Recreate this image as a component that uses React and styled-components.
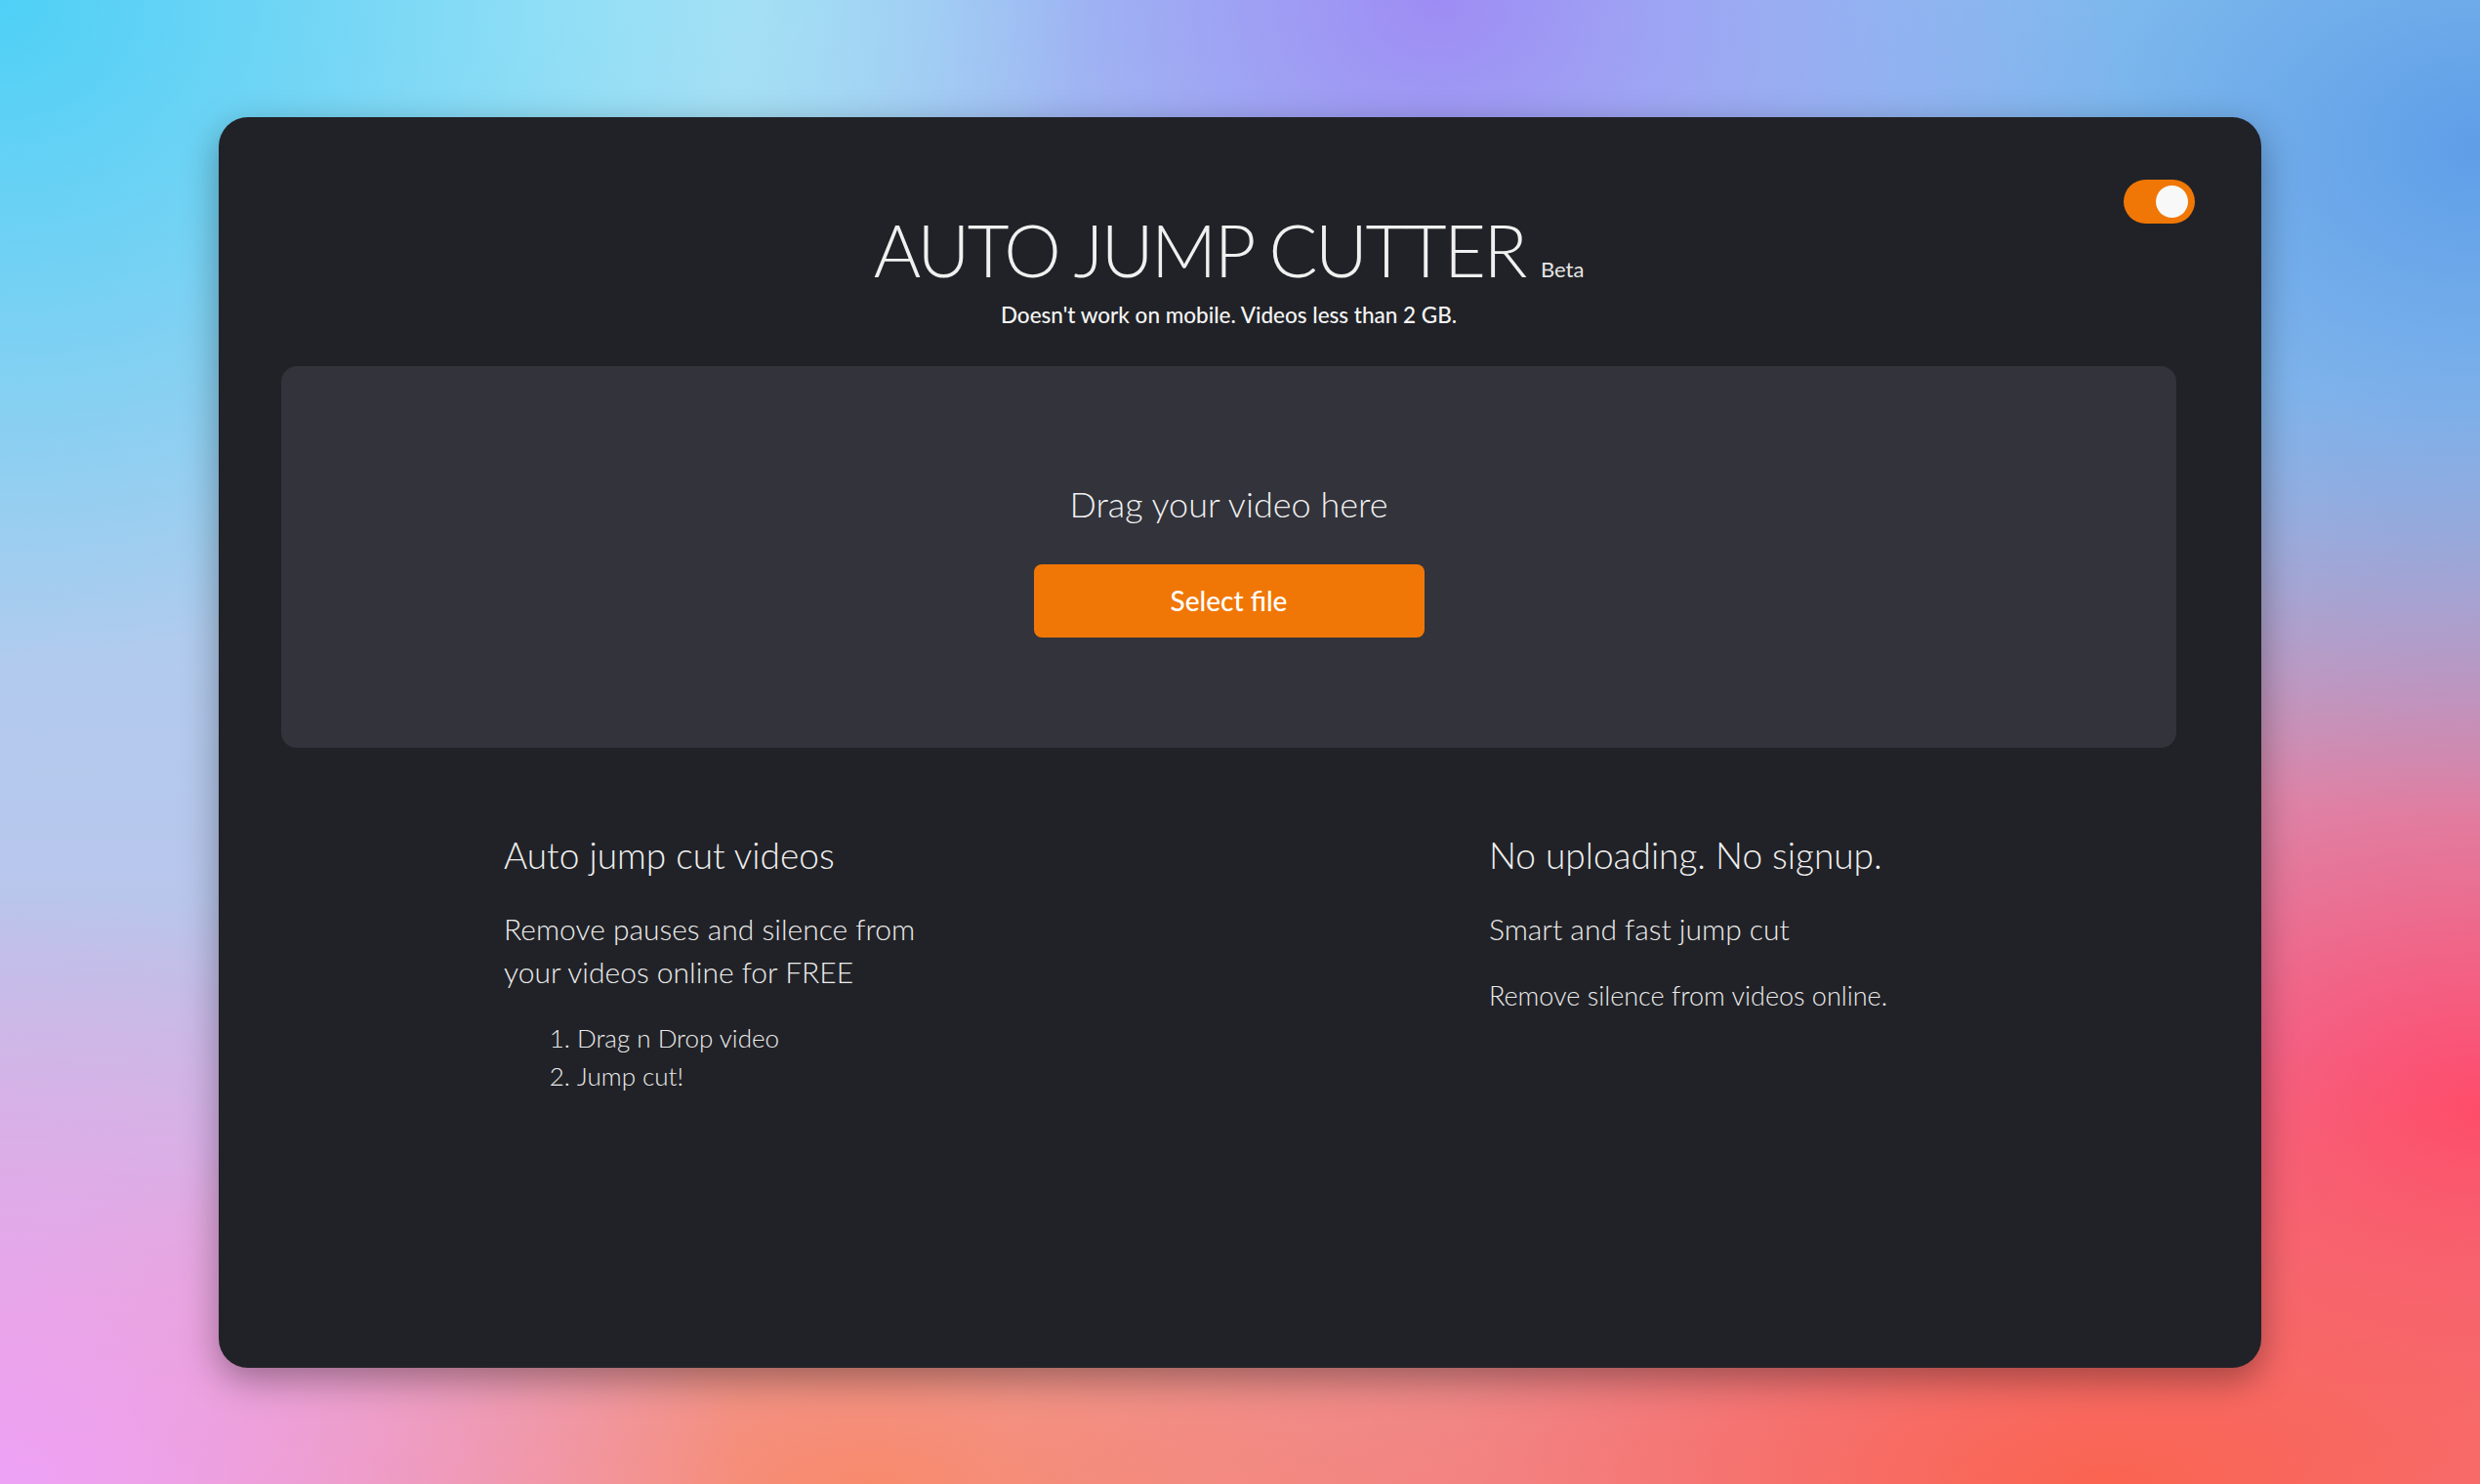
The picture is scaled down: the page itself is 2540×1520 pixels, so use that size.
import React, { useState } from "react";
import styled, { createGlobalStyle } from "styled-components";

const GlobalStyle = createGlobalStyle`
    html, body {
        margin: 0;
        padding: 0;
    }

    body {
        font-family: Lato, "Open Sans", sans-serif;
        min-height: 100vh;
        background-color: #a9c6ee;
        background-image:
            radial-gradient(ellipse 30% 45% at 0% 0%, #4fd0f6 0%, rgba(79, 208, 246, 0) 100%),
            radial-gradient(ellipse 22% 30% at 22% 0%, #a6e4f6 0%, rgba(166, 228, 246, 0) 100%),
            radial-gradient(ellipse 28% 40% at 58% 0%, #9e8cf4 0%, rgba(158, 140, 244, 0) 100%),
            radial-gradient(ellipse 35% 45% at 100% 10%, #5f9ee8 0%, rgba(95, 158, 232, 0) 100%),
            radial-gradient(ellipse 45% 30% at 85% 100%, #fa6450 0%, rgba(250, 100, 80, 0) 100%),
            radial-gradient(ellipse 45% 50% at 100% 75%, #ff4a6c 0%, rgba(255, 74, 108, 0) 100%),
            radial-gradient(ellipse 30% 40% at 0% 100%, #eea2f6 0%, rgba(238, 162, 246, 0) 100%),
            radial-gradient(ellipse 40% 30% at 35% 100%, #f88a6c 0%, rgba(248, 138, 108, 0) 100%),
            linear-gradient(180deg, #9ed8f2 0%, #b8c6ec 60%, #e7a4c8 100%);
    }
`;

const Page = styled.div`
    min-height: 100vh;
    display: flex;
    align-items: center;
    justify-content: center;
`;

const Card = styled.main`
    position: relative;
    box-sizing: border-box;
    width: 2092px;
    height: 1281px;
    padding: 91px 87px 0 64px;
    background: #212227;
    border-radius: 30px;
    box-shadow: 0 12px 36px rgba(0, 0, 0, 0.35);
    color: #ededed;
`;

const Toggle = styled.button`
    position: absolute;
    top: 64px;
    right: 68px;
    width: 73px;
    height: 45px;
    padding: 0 7px;
    border: none;
    border-radius: 23px;
    background: #f07706;
    display: flex;
    align-items: center;
    justify-content: ${(p) => (p.$on ? "flex-end" : "flex-start")};
    cursor: pointer;

    &::after {
        content: "";
        width: 33px;
        height: 33px;
        border-radius: 50%;
        background: #f8f8f8;
    }
`;

const Header = styled.header`
    text-align: center;
`;

const Title = styled.h1`
    margin: 0;
    font-size: 74px;
    line-height: 90px;
    font-weight: 300;
    letter-spacing: -2.5px;
    color: #f0f0f0;
`;

const Badge = styled.span`
    margin-left: 16px;
    font-size: 22px;
    line-height: 1;
    font-weight: 400;
    letter-spacing: 0;
    color: #e6e6e6;
`;

const Subtitle = styled.p`
    margin: 8px 0 0;
    font-size: 22.5px;
    line-height: 28px;
    font-weight: 500;
    color: #f4f4f4;
`;

const DropZone = styled.section`
    margin-top: 38px;
    height: 391px;
    box-sizing: border-box;
    padding-top: 119px;
    background: #32333b;
    border-radius: 16px;
    display: flex;
    flex-direction: column;
    align-items: center;
`;

const DropText = styled.p`
    margin: 0;
    font-size: 36px;
    line-height: 44px;
    font-weight: 300;
    color: #f0f0f0;
`;

const SelectButton = styled.button`
    margin-top: 40px;
    width: 400px;
    height: 75px;
    border: none;
    border-radius: 8px;
    background: #f07706;
    color: #ffffff;
    font-family: inherit;
    font-size: 28px;
    line-height: 28px;
    font-weight: 500;
    cursor: pointer;
`;

const Features = styled.section`
    margin-top: 88px;
    padding-left: 228px;
    display: grid;
    grid-template-columns: 1009px 1fr;
`;

const Feature = styled.div`
    display: flex;
    flex-direction: column;
`;

const FeatureTitle = styled.h2`
    margin: 0;
    font-size: 37px;
    line-height: 44px;
    font-weight: 300;
    color: #f0f0f0;
`;

const FeatureText = styled.p`
    margin: ${(p) => (p.$small ? "27px" : "31px")} 0 0;
    max-width: 460px;
    font-size: ${(p) => (p.$small ? "27px" : "30px")};
    line-height: ${(p) => (p.$small ? "40px" : "44px")};
    font-weight: 300;
    color: #ececec;
`;

const Steps = styled.ol`
    margin: 27px 0 0;
    padding-left: 75px;
    font-size: 26px;
    line-height: 39px;
    font-weight: 300;
    color: #ececec;
`;

export default function App() {
    const [on, setOn] = useState(true);

    return (
        <>
            <GlobalStyle />
            <Page>
                <Card>
                    <Toggle $on={on} aria-label="Theme" onClick={() => setOn(!on)} />
                    <Header>
                        <Title>
                            AUTO JUMP CUTTER<Badge>Beta</Badge>
                        </Title>
                        <Subtitle>Doesn't work on mobile. Videos less than 2 GB.</Subtitle>
                    </Header>
                    <DropZone>
                        <DropText>Drag your video here</DropText>
                        <SelectButton>Select file</SelectButton>
                    </DropZone>
                    <Features>
                        <Feature>
                            <FeatureTitle>Auto jump cut videos</FeatureTitle>
                            <FeatureText>Remove pauses and silence from your videos online for FREE</FeatureText>
                            <Steps>
                                <li>Drag n Drop video</li>
                                <li>Jump cut!</li>
                            </Steps>
                        </Feature>
                        <Feature>
                            <FeatureTitle>No uploading. No signup.</FeatureTitle>
                            <FeatureText>Smart and fast jump cut</FeatureText>
                            <FeatureText $small>Remove silence from videos online.</FeatureText>
                        </Feature>
                    </Features>
                </Card>
            </Page>
        </>
    );
}
